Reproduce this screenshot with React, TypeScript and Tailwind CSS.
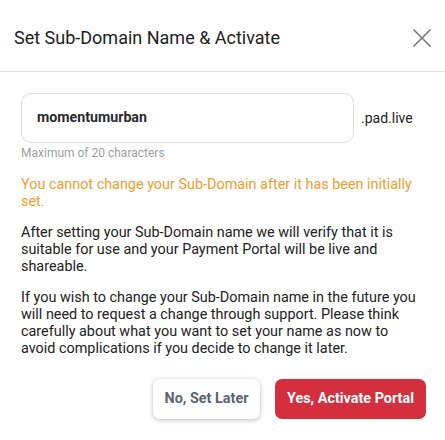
import React from "react";

export default function App() {
  return (
    <div className="w-[445px] h-[440px] bg-white overflow-hidden" style={{ fontFamily: "Roboto, 'Liberation Sans', sans-serif" }}>
      <div className="h-[72px] flex items-center justify-between pl-[14px] pr-[13px] border-b border-[#e3e3e3]">
        <h1 className="text-[18px] text-[#212121] leading-none pt-[4px]">Set Sub-Domain Name &amp; Activate</h1>
        <svg width="20" height="20" viewBox="0 0 20 20" className="mt-[4px]">
          <path d="M1.5 1.5 L18.5 18.5 M18.5 1.5 L1.5 18.5" stroke="#777" strokeWidth="1.6" fill="none" />
        </svg>
      </div>
      <div className="px-[21px] pt-[21px]">
        <div className="flex items-center">
          <div className="w-[333px] h-[50px] rounded-[10px] border border-[#dcdcdc] flex items-center pl-[15px] text-[14.2px] font-bold text-[#2a2a2a]">
            momentumurban
          </div>
          <span className="ml-[7px] text-[14px] text-[#222]">.pad.live</span>
        </div>
        <div className="mt-[3px] text-[12px] text-[#9aa0a6] leading-[15px]">Maximum of 20 characters</div>
        <p className="mt-[15px] text-[14.4px] leading-[17px] text-[#f49d28]">
          You cannot change your Sub-Domain after it has been initially set.
        </p>
        <p className="mt-[14px] text-[14.4px] leading-[17px] text-[#222]">
          After setting your Sub-Domain name we will verify that it is suitable for use and your Payment Portal will be live and shareable.
        </p>
        <p className="mt-[14px] text-[14.4px] leading-[17px] text-[#222]">
          If you wish to change your Sub-Domain name in the future you will need to request a change through support. Please think carefully about what you want to set your name as now to avoid complications if you decide to change it later.
        </p>
        <div className="mt-[22px] flex justify-end gap-[15px] mr-[-2px]">
          <button className="h-[40px] w-[107px] rounded-[7px] bg-white shadow-[0_1px_5px_rgba(0,0,0,0.28)] text-[14.4px] font-bold text-[#5b6370]">
            No, Set Later
          </button>
          <button className="h-[40px] w-[151px] rounded-[7px] bg-[#d52f3e] text-[14.4px] font-bold text-white">
            Yes, Activate Portal
          </button>
        </div>
      </div>
    </div>
  );
}
